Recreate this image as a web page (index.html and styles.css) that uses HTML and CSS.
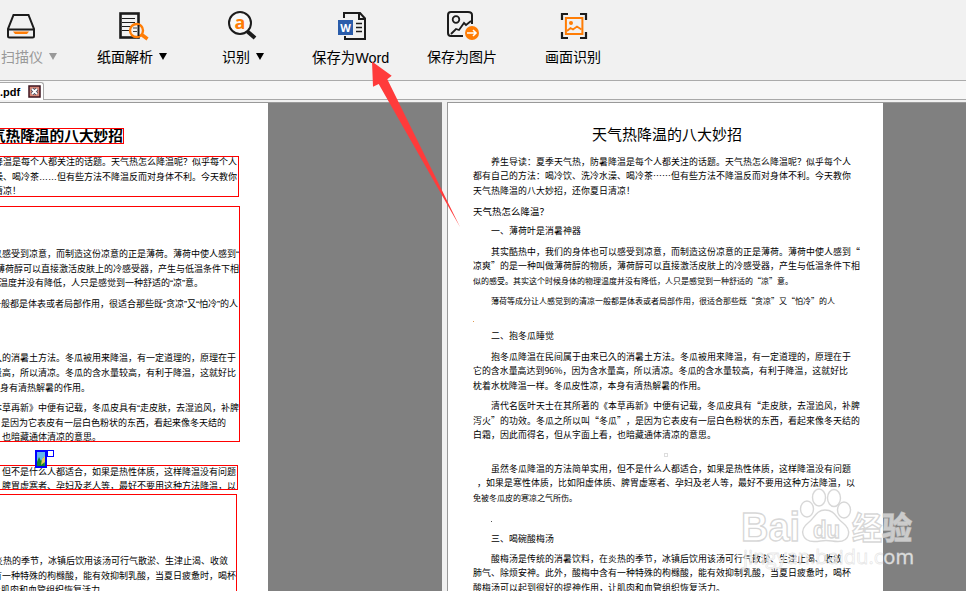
FILE: index.html
```html
<!DOCTYPE html>
<html lang="zh-CN">
<head>
  <meta charset="UTF-8">
  <title>保存为Word</title>
  <link rel="stylesheet" href="styles.css">
</head>
<body>
  <!-- Toolbar -->
  <header class="toolbar">
    <div class="tool tool-scan">
      <svg width="32" height="32" viewBox="0 0 32 32" fill="none">
        <path d="M8.500 5H23.500L29 19V26Q29 27.500 27.500 27.500H4.500Q3 27.500 3 26V19ZM3 19.500H29" stroke="#1c1c1c" stroke-width="2"/>
        <path d="M8 21.500H24L22 24H10Z" fill="#ff7d05"/>
      </svg>
      <div class="label disabled"><span>扫描仪</span><i class="caret"></i></div>
    </div>
    <div class="tool tool-parse">
      <svg width="32" height="32" viewBox="0 0 32 32" fill="none">
        <rect x="2.500" y="3.500" width="18" height="24" stroke="#1c1c1c" stroke-width="2.600"/>
        <path d="M4 8.500H17M4 12.500H17M4 16.500H14M4 20.500H12" stroke="#1c1c1c"/>
        <circle cx="18.500" cy="20.500" r="6.500" fill="#f1f1f1" stroke="#ff7d05" stroke-width="2.400"/>
        <path d="M15 18H19M15 21.500H19" stroke="#444"/>
        <path d="M20.500 15V26" stroke="#1c1c1c" stroke-width="2"/>
        <path d="M23.500 24.500L29.500 29" stroke="#ff7d05" stroke-width="3.500"/>
      </svg>
      <div class="label bold"><span>纸面解析</span><i class="caret"></i></div>
    </div>
    <div class="tool tool-ocr">
      <svg width="32" height="32" viewBox="0 0 32 32" fill="none">
        <circle cx="13" cy="13" r="11" fill="#f8f8f8" stroke="#1c1c1c" stroke-width="2"/>
        <path d="M20.500 21.500L28 28" stroke="#1c1c1c" stroke-width="4"/>
        <text x="13" y="19" class="icon-a">a</text>
      </svg>
      <div class="label"><span>识别</span><i class="caret"></i></div>
    </div>
    <div class="tool tool-word">
      <svg width="32" height="32" viewBox="0 0 32 32" fill="none">
        <path d="M7 8V3H23L28 8.500V29H8V26M22 3V9H28" stroke="#1c1c1c" stroke-width="2"/>
        <path d="M19 13.500H25M19 17.500H25M19 21.500H25" stroke="#1c1c1c" stroke-width="1.600"/>
        <rect x="1" y="10" width="15" height="15" fill="#2a5caa"/>
        <text x="8.500" y="21.500" class="icon-w">W</text>
      </svg>
      <div class="label"><span>保存为Word</span></div>
    </div>
    <div class="tool tool-image">
      <svg width="34" height="32" viewBox="0 0 34 32" fill="none">
        <path d="M17 26H5Q2 26 2 23V5Q2 2 5 2H22Q26 2 26 5V14" stroke="#1c1c1c" stroke-width="2"/>
        <circle cx="10" cy="9.500" r="3.300" stroke="#1c1c1c" stroke-width="1.800"/>
        <path d="M5 24L10 19L13 20L18 13L20 15L25 11" stroke="#1c1c1c" stroke-width="1.800"/>
        <circle cx="26" cy="23" r="7" fill="#ff7d05"/>
        <path d="M21 23H30M27 20L30 23L27 26" stroke="#fff" stroke-width="1.600"/>
      </svg>
      <div class="label"><span>保存为图片</span></div>
    </div>
    <div class="tool tool-screen">
      <svg width="32" height="32" viewBox="0 0 32 32" fill="none">
        <path d="M3 10V4H9M21 4H27V10M27 22V28H21M9 28H3V22" stroke="#1c1c1c" stroke-width="2.200"/>
        <rect x="6.900" y="8" width="16.500" height="16" stroke="#ff7d05" stroke-width="2"/>
        <circle cx="12" cy="13" r="2" fill="#ff7d05"/>
        <path d="M8 21L11.500 18L14 19.500L18 16.500L22.500 19.500" stroke="#ff7d05" stroke-width="1.800"/>
      </svg>
      <div class="label"><span>画面识别</span></div>
    </div>
  </header>

  <!-- File tabs -->
  <nav class="tabs">
    <div class="tab">
      <span>.pdf</span>
      <svg width="13" height="13" viewBox="0 0 13 13">
        <rect x="1" y="1" width="11" height="11" fill="#d88878" stroke="#3f1620" stroke-width="1.500"/>
        <path d="M4 4L9 9M9 4L4 9" stroke="#444a5c" stroke-width="3.500"/>
        <path d="M4 4L9 9M9 4L4 9" stroke="#fff" stroke-width="1.800"/>
      </svg>
    </div>
  </nav>

  <main class="workspace">
    <!-- Source page with recognised areas -->
    <section class="pane source">
      <div class="page">
        <div class="area area-title"><span>气热降温的八大妙招</span></div>
        <div class="area area-intro">
          <p>
            <span>降温是每个人都关注的话题。天气热怎么降温呢？似乎每个人</span>
            <span>澡、喝冷茶……但有些方法不降温反而对身体不利。今天教你</span>
            <span class="end-intro">清凉！</span>
          </p>
        </div>
        <div class="area area-main">
          <p>
            <span>以感受到凉意，而制造这份凉意的正是薄荷。薄荷中使人感到“</span>
            <span>薄荷醇可以直接激活皮肤上的冷感受器，产生与低温条件下相</span>
            <span class="end-mint">理温度并没有降低，人只是感觉到一种舒适的“凉”意。</span>
          </p>
          <p><span class="end-a">一般都是体表或者局部作用，很适合那些既“贪凉”又“怕冷”的人</span></p>
          <p class="melon">
            <span class="end-b">久的消暑土方法。冬瓜被用来降温，有一定道理的，原理在于</span>
            <span class="end-b">量高，所以清凉。冬瓜的含水量较高，有利于降温，这就好比</span>
            <span class="end-melon">本身有清热解暑的作用。</span>
          </p>
          <p>
            <span>本草再新》中便有记载，冬瓜皮具有“走皮肤，去湿追风，补脾</span>
            <span class="end-frost">，是因为它表皮有一层白色粉状的东西，看起来像冬天结的</span>
            <span class="end-mean">，也暗藏通体清凉的意思。</span>
          </p>
        </div>
        <div class="area area-note">
          <p>
            <span>，但不是什么人都适合，如果是热性体质，这样降温没有问题</span>
            <span>、脾胃虚寒者、孕妇及老人等，最好不要用这种方法降温，以</span>
          </p>
        </div>
        <div class="area area-plum">
          <p>
            <span class="end-season">炎热的季节，冰镇后饮用该汤可行气散淤、生津止渴、收敛</span>
            <span>有一种特殊的枸橼酸，能有效抑制乳酸，当夏日疲惫时，喝杯</span>
            <span class="end-last">让肌肉和血管组织恢复活力。</span>
          </p>
        </div>
        <svg class="picture-area" width="20" height="19" viewBox="0 0 20 19">
          <rect x="1" y="1" width="10" height="16" fill="#62b5ec" stroke="#00f" stroke-width="2"/>
          <path d="M2 12L4 7L6 11L9 7L10 16H2Z" fill="#16842c"/>
          <path d="M7 9L10 6V12L6 15Z" fill="#dfcd57"/>
          <rect x="12.500" y=".5" width="6" height="6" fill="#fff" stroke="#00f"/>
        </svg>
      </div>
    </section>

    <!-- Recognition result -->
    <section class="pane result">
      <div class="page">
        <h1>天气热降温的八大妙招</h1>
        <p>
          <span class="first w360">养生导读：夏季天气热，防暑降温是每个人都关注的话题。天气热怎么降温呢？似乎每个人</span>
          <span class="w378">都有自己的方法：喝冷饮、洗冷水澡、喝冷茶……但有些方法不降温反而对身体不利。今天教你</span>
          <span class="w162">天气热降温的八大妙招，还你夏日清凉！</span>
        </p>
        <p class="question"><span>天气热怎么降温？</span></p>
        <p><span class="first w90">一、薄荷叶是消暑神器</span></p>
        <p>
          <span class="first w369">其实酷热中，我们的身体也可以感受到凉意，而制造这份凉意的正是薄荷。薄荷中使人感到“</span>
          <span class="w387">凉爽”的是一种叫做薄荷醇的物质，薄荷醇可以直接激活皮肤上的冷感受器，产生与低温条件下相</span>
          <span class="small w320">似的感受。其实这个时候身体的物理温度并没有降低，人只是感觉到一种舒适的“凉”意。</span>
        </p>
        <p><span class="first small w344">薄荷等成分让人感觉到的清凉一般都是体表或者局部作用，很适合那些既“贪凉”又“怕冷”的人</span></p>
        <div class="blank blank-mint"><i class="speck"></i></div>
        <p><span class="first w63">二、抱冬瓜睡觉</span></p>
        <p>
          <span class="first w360">抱冬瓜降温在民间属于由来已久的消暑土方法。冬瓜被用来降温，有一定道理的，原理在于</span>
          <span class="w375">它的含水量高达到96%，因为含水量高，所以清凉。冬瓜的含水量较高，有利于降温，这就好比</span>
          <span class="w234">枕着水枕降温一样。冬瓜皮性凉，本身有清热解暑的作用。</span>
        </p>
        <p>
          <span class="first w369">清代名医叶天士在其所著的《本草再新》中便有记载，冬瓜皮具有“走皮肤，去湿追风，补脾</span>
          <span class="w387">泻火”的功效。冬瓜之所以叫“冬瓜”，是因为它表皮有一层白色粉状的东西，看起来像冬天结的</span>
          <span class="w243">白霜，因此而得名，但从字面上看，也暗藏通体清凉的意思。</span>
        </p>
        <div class="blank blank-melon"><i class="ring"></i></div>
        <p>
          <span class="first w360">虽然冬瓜降温的方法简单实用，但不是什么人都适合，如果是热性体质，这样降温没有问题</span>
          <span class="hang w378">，如果是寒性体质，比如阳虚体质、脾胃虚寒者、孕妇及老人等，最好不要用这种方法降温，以</span>
          <span class="small w104">免被冬瓜皮的寒凉之气所伤。</span>
        </p>
        <div class="blank blank-plum"><i class="speck dark"></i></div>
        <p><span class="first w63">三、喝碗酸梅汤</span></p>
        <p>
          <span class="first w351">酸梅汤是传统的消暑饮料，在炎热的季节，冰镇后饮用该汤可行气散淤、生津止渴、收敛</span>
          <span class="w378">肺气、除烦安神。此外，酸梅中含有一种特殊的枸橼酸，能有效抑制乳酸，当夏日疲惫时，喝杯</span>
          <span class="w252">酸梅汤可以起到很好的提神作用，让肌肉和血管组织恢复活力。</span>
        </p>
      </div>
    </section>
  </main>

  <!-- Pointer to the Word button -->
  <svg class="pointer" width="90" height="167" viewBox="0 0 90 167">
    <path d="M2 1.500L21.700 15.700L17.300 19.300L90 167L8.700 24L3 26.700Z" fill="#ff3b3b"/>
  </svg>

  <svg class="watermark" width="180" height="86" viewBox="0 0 180 86">
    <g class="logo">
      <text x="1" y="54" textLength="59" lengthAdjust="spacingAndGlyphs" class="brand">Bai</text>
      <ellipse cx="67" cy="22" rx="6.500" ry="8"/>
      <ellipse cx="79" cy="10.500" rx="6.500" ry="8.500"/>
      <ellipse cx="94" cy="11" rx="6.500" ry="8.500"/>
      <ellipse cx="104" cy="23" rx="6.500" ry="8"/>
      <path d="M85 23C76 23 74 32 68 36C59 43 62 54.500 74 54.500C80 54.500 81 53.500 86 53.500C91 53.500 93 54.500 98 54.500C110 54.500 112 43 103 36C96 31 95 23 85 23Z"/>
      <text x="73" y="50.500" textLength="27" lengthAdjust="spacingAndGlyphs" class="du">du</text>
      <text x="112" y="52" textLength="60" lengthAdjust="spacingAndGlyphs" class="exp">经验</text>
    </g>
    <text x="3" y="77" textLength="171" lengthAdjust="spacingAndGlyphs" class="site">jingyan.baidu.com</text>
  </svg>
</body>
</html>
```

FILE: styles.css
```css
* {
  box-sizing: border-box;
}

body {
  margin: 0;
  width: 966px;
  height: 591px;
  overflow: hidden;
  position: relative;
  display: flex;
  flex-direction: column;
  background: #f1f1f1;
  color: #000;
  font-family: "Liberation Sans", "Noto Sans CJK SC", sans-serif;
}

p, h1 {
  margin: 0;
}

svg {
  display: block;
}

/* Toolbar */
.toolbar {
  flex: none;
  height: 81px;
  padding-top: 10px;
  display: grid;
  grid-template-columns: 97px 125px 90px 115px 118px 1fr;
  border-bottom: 1px solid #ababab;
}

.label {
  display: flex;
  align-items: center;
  height: 20px;
  margin-top: 4px;
  font-size: 14px;
  white-space: nowrap;
}

.tool-scan svg { margin-left: 5px; }
.tool-scan .label { margin-left: 1px; }
.tool-parse svg { margin-left: 21px; }
.tool-ocr svg { margin-left: 5px; }
.tool-word svg { margin-left: 25px; }
.tool-image svg { margin-left: 19px; }
.tool-screen svg { margin-left: 14px; }

.tool-word .label {
  font-size: 14.4px;
}

.bold {
  -webkit-text-stroke: 0.1px #000;
}

.caret {
  margin-left: 6px;
  border: 4px solid transparent;
  border-top: 7px solid #000;
  border-bottom: 0;
}

.disabled {
  color: #999;
}

.disabled .caret {
  border-top-color: #999;
}

.icon-a {
  fill: #ff7d05;
  font: bold 18px "Open Sans", sans-serif;
  text-anchor: middle;
}

.icon-w {
  fill: #fff;
  font: bold 11px "Open Sans", sans-serif;
  text-anchor: middle;
}

/* Tabs */
.tabs {
  flex: none;
  height: 19px;
  background: #f7f7f7;
  border-bottom: 1px solid #a9a9a9;
}

.tab {
  display: flex;
  align-items: center;
  justify-content: space-between;
  width: 44px;
  height: 18px;
  margin-top: 1px;
  padding-right: 2px;
  background: #fff;
  border: 1px solid #a9a9a9;
  border-width: 1px 1px 0 0;
  border-radius: 0 3px 0 0;
  font-size: 11px;
  font-weight: bold;
}

/* Workspace */
.workspace {
  flex: 1;
  min-height: 0;
  margin-top: 2px;
  display: flex;
  gap: 5px;
}

.pane {
  background: #808080;
  border-top: 1px solid #999;
  overflow: hidden;
}

.source {
  width: 442px;
}

.result {
  flex: 1;
  border-left: 1px solid #999;
}

.page {
  height: 100%;
  overflow: hidden;
  background: #fff;
  font-size: 9px;
  line-height: 14.6px;
}

.page p span {
  display: block;
  white-space: nowrap;
}

/* Source page */
.source .page {
  position: relative;
  width: 268px;
}

.area {
  border: 1px solid #f00;
  border-left: 0;
  overflow: hidden;
}

.area span,
.area p span {
  display: flex;
  justify-content: flex-end;
}

.area p + p {
  margin-top: 6px;
}

.area-title {
  width: 124px;
  height: 16px;
  margin-top: 25px;
  font-size: 14.7px;
  font-weight: bold;
  line-height: 15px;
  white-space: nowrap;
}

.area-intro {
  width: 239px;
  height: 41px;
  margin-top: 12px;
}

.area-intro p {
  margin: -2px 1px 0 0;
}

.area-main {
  width: 240px;
  height: 236px;
  margin-top: 9px;
  padding-top: 40px;
}

.area-main .melon {
  margin-top: 40px;
}

.area-note {
  width: 238px;
  height: 25px;
  margin-top: 23px;
}

.area-note p {
  margin: -1.500px 1px 0 0;
}

.area-plum {
  width: 237px;
  height: 110px;
  margin-top: 4px;
  padding-top: 59px;
}

.end-intro { margin-right: 216px; }
.end-mint { margin-right: 36px; }
.end-a { margin-right: 1px; }
.end-b { margin-right: 3px; }
.end-melon { margin-right: 149px; }
.end-frost { margin-right: 13px; }
.end-mean { margin-right: 138px; }
.end-season { margin-right: 8px; }
.end-last { margin-right: 127px; }

.picture-area {
  position: absolute;
  left: 35px;
  top: 347px;
}

/* Result page */
.result .page {
  width: 435px;
  padding: 21px 0 0 25px;
  font-family: "Noto Sans CJK SC", sans-serif;
  font-size: 8.9px;
  text-spacing-trim: space-all;
}

.result h1 {
  width: 150px;
  margin-left: 119px;
  margin-bottom: 10.600px;
  font-size: 15px;
  font-weight: 400;
  line-height: 20px;
  white-space: nowrap;
}

.result p {
  margin-bottom: 5.700px;
}

.result p span {
  text-align-last: justify;
}

.result .first {
  margin-left: 18px;
}

.result .hang {
  margin-left: 4px;
}

.result .small {
  font-size: 8px;
}

.question {
  width: 76px;
  font-size: 9.400px;
}

.w63 { width: 63px; }
.w90 { width: 90px; }
.w104 { width: 104px; }
.w162 { width: 162px; }
.w234 { width: 233px; }
.w243 { width: 243px; }
.w252 { width: 252px; }
.w320 { width: 319px; }
.w344 { width: 344px; }
.w351 { width: 351px; }
.w360 { width: 360px; }
.w369 { width: 369px; }
.w375 { width: 375px; }
.w378 { width: 378px; }
.w387 { width: 387px; }

.blank {
  display: flex;
  align-items: center;
}

.blank-mint { height: 15px; }
.blank-melon { height: 13px; }
.blank-plum { height: 20.500px; padding-left: 18px; }

.speck {
  width: 1px;
  height: 1px;
  background: #e09a50;
}

.speck.dark {
  background: #555;
}

.ring {
  width: 4px;
  height: 4px;
  margin-left: 191px;
  border: 1px solid #ddd;
}

/* Overlays */
.pointer {
  position: absolute;
  left: 370px;
  top: 60px;
}

.watermark {
  position: absolute;
  left: 740px;
  top: 487px;
}

.logo {
  fill: rgba(255, 255, 255, 0.6);
  stroke: rgba(205, 205, 205, 0.8);
  stroke-width: 1.4;
}

.brand {
  font: bold 40px "Liberation Sans", sans-serif;
}

.du {
  font: bold 24px "Liberation Sans", sans-serif;
}

.exp {
  font: bold 31px "Noto Sans CJK SC", sans-serif;
}

.site {
  fill: rgba(255, 255, 255, 0.75);
  stroke: rgba(215, 215, 215, 0.6);
  stroke-width: 0.8;
  font: 20px "Open Sans", sans-serif;
}
```
